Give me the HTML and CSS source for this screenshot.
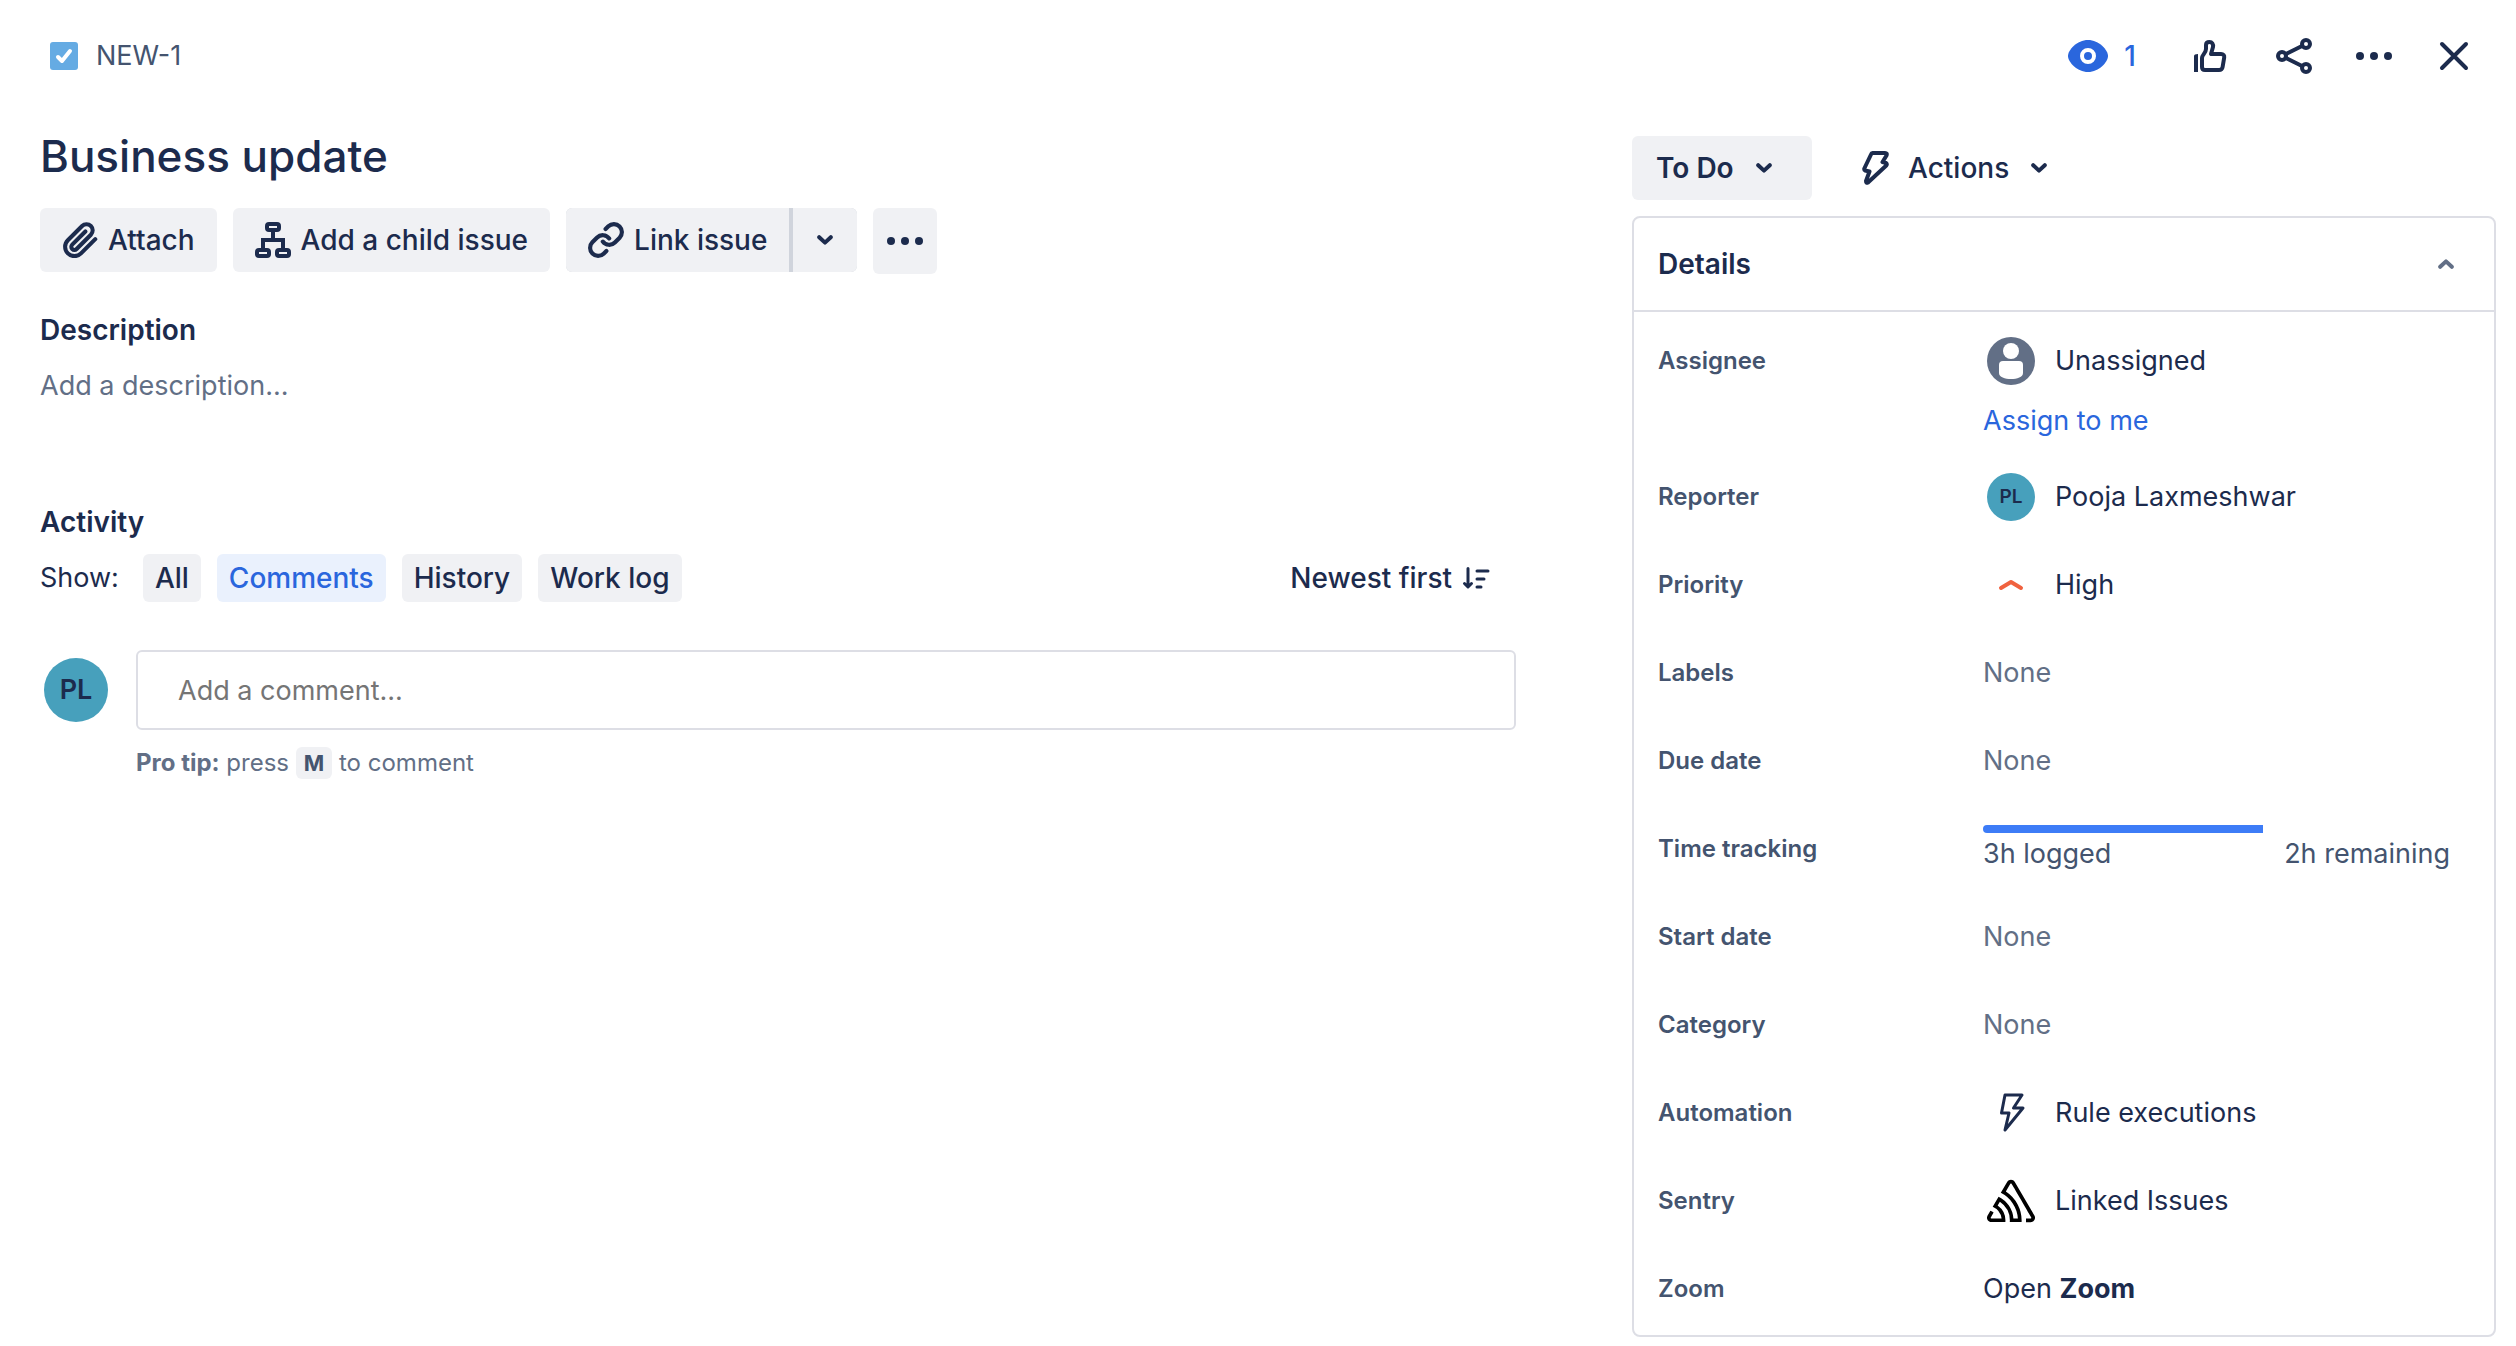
FILE: index.html
```html
<!DOCTYPE html>
<html lang="en">
<head>
<meta charset="utf-8">
<title>NEW-1 Business update</title>
<meta name="viewport" content="width=device-width, initial-scale=1.0">
<link rel="stylesheet" href="styles.css">
</head>
<body>
<header class="topbar">
	<div class="breadcrumb">
		<svg width="28" height="28" viewBox="0 0 28 28"><rect width="28" height="28" rx="3" fill="#65abe3"/><path d="M8 15l4 4 8-10" fill="none" stroke="#fff" stroke-width="4" stroke-linecap="round" stroke-linejoin="round"/></svg>
		<a href="#">NEW-1</a>
	</div>
	<div class="top-actions">
		<button class="icon-btn watch" type="button" aria-label="Watch options">
			<svg width="40" height="32" viewBox="0 0 40 32"><path d="M20 0C31 0 40 10 40 16S31 32 20 32 0 22 0 16 9 0 20 0z" fill="currentColor"/><circle cx="20" cy="16" r="6" fill="none" stroke="#fff" stroke-width="4"/></svg>
			<span>1</span>
		</button>
		<button class="icon-btn vote" type="button" aria-label="Vote">
			<svg class="line" width="40" height="40" viewBox="0 0 40 40"><path d="M4 36V20q0-2 4-2v18z" fill="currentColor" stroke="none"/><path d="M12 22c0-3 4-5 4-9V9c0-2 1.5-3 3.500-3 2.500 0 4 2 3.500 5l-2 7h10c2.500 0 3.500 1.500 3.200 3.500L32.600 31c-.3 2-1.600 3-3.600 3H15c-2 0-3-1-3-3z"/></svg>
		</button>
		<button class="icon-btn" type="button" aria-label="Share">
			<svg class="line" width="40" height="40" viewBox="0 0 40 40"><circle cx="32" cy="8" r="4"/><circle cx="8" cy="20" r="4"/><circle cx="32" cy="32" r="4"/><path d="M12 18l16-8M12 22l16 8"/></svg>
		</button>
		<button class="icon-btn" type="button" aria-label="More actions">
			<svg width="40" height="40" viewBox="0 0 40 40" fill="currentColor"><circle cx="6" cy="20" r="4"/><circle cx="20" cy="20" r="4"/><circle cx="34" cy="20" r="4"/></svg>
		</button>
		<button class="icon-btn" type="button" aria-label="Close">
			<svg class="line" width="40" height="40" viewBox="0 0 40 40"><path d="M8 8l24 24M32 8L8 32"/></svg>
		</button>
	</div>
</header>

<div class="columns">
<main>
	<h1>Business update</h1>
	<div class="toolbar">
		<button class="btn" type="button">
			<svg class="line" width="36" height="36" viewBox="0 0 23.2 23.2"><path d="M21.44 11.05l-9.19 9.19a6 6 0 0 1-8.49-8.49l9.19-9.19a4 4 0 0 1 5.66 5.66l-9.2 9.19a2 2 0 0 1-2.83-2.83l8.49-8.48" stroke-width="2.6"/></svg>
			Attach
		</button>
		<button class="btn" type="button">
			<svg class="line" width="36" height="36" viewBox="0 0 36 36"><rect x="12" y="2" width="12" height="6" rx="2"/><rect x="2" y="28" width="12" height="6" rx="2"/><rect x="22" y="28" width="12" height="6" rx="2"/><path d="M18 10v8M8 26v-8h20v8" stroke-linecap="butt" stroke-linejoin="miter"/></svg>
			Add a child issue
		</button>
		<div class="split">
			<button class="btn" type="button">
				<svg class="line" width="36" height="36" viewBox="0.75 0.75 22.5 22.5"><path d="M10 13a5 5 0 0 0 7.54.54l3-3a5 5 0 0 0-7.07-7.07l-1.72 1.71M14 11a5 5 0 0 0-7.54-.54l-3 3a5 5 0 0 0 7.07 7.07l1.71-1.71" stroke-width="2.6"/></svg>
				Link issue
			</button>
			<button class="btn square" type="button" aria-label="Link options">
				<svg class="line" width="16" height="10" viewBox="0 0 16 10"><path d="M2.2 2.2L8 7.6l5.8-5.4"/></svg>
			</button>
		</div>
		<button class="btn square more" type="button" aria-label="More">
			<svg width="40" height="40" viewBox="0 0 40 40" fill="currentColor"><circle cx="6" cy="20" r="4"/><circle cx="20" cy="20" r="4"/><circle cx="34" cy="20" r="4"/></svg>
		</button>
	</div>

	<section class="description">
		<h2>Description</h2>
		<p>Add a description...</p>
	</section>

	<section class="activity">
		<h2>Activity</h2>
		<div class="filters">
			<span class="show">Show:</span>
			<button class="chip" type="button">All</button>
			<button class="chip selected" type="button">Comments</button>
			<button class="chip" type="button">History</button>
			<button class="chip" type="button">Work log</button>
			<button class="sort" type="button">
				Newest first
				<svg class="line" width="28" height="24" viewBox="0 0 28 24"><path d="M6 2.500v18M2.500 17.500L6 21l3.500-3.500M15 5h11M15 13h7M15 21h4" stroke-width="3"/></svg>
			</button>
		</div>
		<div class="comment">
			<span class="avatar">PL</span>
			<div class="comment-body">
				<input type="text" aria-label="Add a comment" placeholder="Add a comment...">
				<p class="tip"><strong>Pro tip:</strong> press <kbd>M</kbd> to comment</p>
			</div>
		</div>
	</section>
</main>

<aside>
	<div class="status-row">
		<div class="status">
			<select aria-label="Status"><option>To Do</option></select>
			<svg class="line" width="16" height="10" viewBox="0 0 16 10"><path d="M2.2 2.2L8 7.6l5.8-5.4"/></svg>
		</div>
		<button class="actions" type="button">
			<svg class="line" width="28" height="34" viewBox="0 0 28 34"><path d="M10.5 2H23q2.500 0 1.500 2.500L20.500 11l3.500 1q1.500 1 .3 2.500L6 31.500q-2 1-2-1.500L7.500 20.500 3 19.500Q2 19 2.300 17.500L9 3.500Q9.500 2 10.500 2z"/></svg>
			Actions
			<svg class="line" width="16" height="10" viewBox="0 0 16 10"><path d="M2.2 2.2L8 7.6l5.8-5.4"/></svg>
		</button>
	</div>

	<div class="card">
		<div class="card-head">
			<h2>Details</h2>
			<button class="collapse" type="button" aria-label="Collapse details">
				<svg class="line" width="16" height="10" viewBox="0 0 16 10"><path d="M2.2 7.8L8 2.4l5.8 5.4"/></svg>
			</button>
		</div>
		<dl>
			<div class="field">
				<dt>Assignee</dt>
				<dd>
					<div class="value">
						<svg width="48" height="48" viewBox="0 0 48 48"><circle cx="24" cy="24" r="24" fill="#626f86"/><circle cx="24" cy="14" r="8" fill="#fff"/><path d="M16 24h16q4 0 4 4v8c0 4-6 6-12 6s-12-2-12-6v-8q0-4 4-4z" fill="#fff"/></svg>
						Unassigned
					</div>
					<a class="assign" href="#">Assign to me</a>
				</dd>
			</div>
			<div class="field">
				<dt>Reporter</dt>
				<dd><div class="value"><span class="avatar small">PL</span>Pooja Laxmeshwar</div></dd>
			</div>
			<div class="field">
				<dt>Priority</dt>
				<dd><div class="value"><svg class="line" width="48" height="48" viewBox="0 0 48 48"><path d="M14 27l10-6 10 6" stroke="#f0623f"/></svg>High</div></dd>
			</div>
			<div class="field"><dt>Labels</dt><dd class="none">None</dd></div>
			<div class="field"><dt>Due date</dt><dd class="none">None</dd></div>
			<div class="field">
				<dt>Time tracking</dt>
				<dd class="time">
					<div class="track"><div class="logged" style="width: 60%"></div></div>
					<div class="time-text"><span>3h logged</span><span>2h remaining</span></div>
				</dd>
			</div>
			<div class="field"><dt>Start date</dt><dd class="none">None</dd></div>
			<div class="field"><dt>Category</dt><dd class="none">None</dd></div>
			<div class="field">
				<dt>Automation</dt>
				<dd><div class="value"><svg class="line" width="48" height="48" viewBox="0 0 48 48"><path d="M18 6h17l-8.500 13H36L18 41l4-17h-7.500z" stroke-width="3"/></svg>Rule executions</div></dd>
			</div>
			<div class="field">
				<dt>Sentry</dt>
				<dd><div class="value"><svg width="48" height="48" viewBox="0 0 24 24"><path d="M13.91 2.505c-.873-1.448-2.972-1.448-3.844 0L6.904 7.92a15.478 15.478 0 0 1 8.53 12.811h-2.221A13.301 13.301 0 0 0 5.784 9.814l-2.926 5.06a7.65 7.65 0 0 1 4.435 5.848H2.194a.365.365 0 0 1-.298-.534l1.413-2.402a5.16 5.16 0 0 0-1.614-.913L.296 19.275a2.182 2.182 0 0 0 .812 2.999 2.24 2.24 0 0 0 1.086.288h6.983a9.322 9.322 0 0 0-3.845-8.318l1.11-1.922a11.47 11.47 0 0 1 4.95 10.24h5.915a17.242 17.242 0 0 0-7.885-15.28l2.244-3.845a.37.37 0 0 1 .504-.13c.255.14 9.75 16.708 9.928 16.9a.365.365 0 0 1-.327.543h-2.287c.029.612.029 1.223 0 1.831h2.297a2.206 2.206 0 0 0 1.922-3.31z"/></svg>Linked Issues</div></dd>
			</div>
			<div class="field"><dt>Zoom</dt><dd class="plain">Open <strong>Zoom</strong></dd></div>
		</dl>
	</div>
</aside>
</div>
</body>
</html>
```
FILE: styles.css
```css
* {
	box-sizing: border-box;
}
body {
	margin: 0;
	padding: 24px 20px 0 40px;
	background: #fff;
	color: #1c2b4d;
	font-family: Inter, sans-serif;
	font-size: 27px;
	line-height: 40px;
}
h1, h2, p, dl, dd {
	margin: 0;
}
h2 {
	font-size: 28px;
	font-weight: 600;
	line-height: 40px;
}
a {
	color: #2a66dd;
	text-decoration: none;
}
svg {
	display: block;
	flex: none;
}
.line {
	fill: none;
	stroke: currentColor;
	stroke-width: 4;
	stroke-linecap: round;
	stroke-linejoin: round;
}
button, select, input {
	margin: 0;
	padding: 0;
	border: none;
	background: none;
	color: inherit;
	font: inherit;
}
button, select {
	font-size: 28px;
	font-weight: 500;
	cursor: pointer;
}

/* top bar */
.topbar {
	display: flex;
	justify-content: space-between;
	align-items: center;
	height: 64px;
}
.breadcrumb {
	display: flex;
	align-items: center;
	gap: 18px;
	padding-left: 10px;
}
.breadcrumb a {
	color: #44546f;
}
.top-actions {
	display: flex;
	align-items: center;
	gap: 16px;
	padding-right: 10px;
}
.icon-btn {
	display: flex;
	justify-content: center;
	align-items: center;
	width: 64px;
	height: 64px;
}
.vote {
	width: 72px;
}
.watch {
	gap: 16px;
	width: 112px;
	color: #2a66dd;
}

/* two columns */
.columns {
	display: grid;
	grid-template-columns: 1476fr 864fr;
	gap: 116px;
}
h1 {
	padding-top: 38px;
	font-size: 44px;
	font-weight: 500;
	line-height: 60px;
}
.toolbar {
	display: flex;
	align-items: flex-start;
	gap: 16px;
	padding-top: 22px;
}
.btn {
	display: flex;
	align-items: center;
	gap: 10px;
	height: 64px;
	padding: 0 22px;
	border-radius: 6px;
	background: #f0f1f4;
}
.split {
	display: flex;
	gap: 4px;
	border-radius: 6px;
	background: #d0d4dc;
}
.split .btn:first-child {
	border-radius: 6px 0 0 6px;
}
.split .btn:last-child {
	border-radius: 0 6px 6px 0;
}
.square {
	justify-content: center;
	width: 64px;
	padding: 0;
}
.more {
	height: 66px;
}
.description {
	padding-top: 36px;
}
.description p {
	padding-top: 16px;
	color: #626f86;
}
.activity {
	padding-top: 96px;
}
.filters {
	display: flex;
	align-items: center;
	gap: 16px;
	padding-top: 12px;
}
.show {
	margin-right: 8px;
}
.chip {
	height: 48px;
	padding: 0 12px;
	border-radius: 6px;
	background: #f0f1f4;
}
.selected {
	background: #eaf1fd;
	color: #2a66dd;
}
.sort {
	display: flex;
	align-items: center;
	gap: 10px;
	margin-left: auto;
	padding-right: 26px;
}
.comment {
	display: flex;
	gap: 28px;
	padding: 48px 0 0 4px;
}
.avatar {
	flex: none;
	width: 64px;
	height: 64px;
	margin-top: 8px;
	border-radius: 50%;
	background: #47a0bc;
	font-weight: 600;
	line-height: 64px;
	text-align: center;
}
.small {
	width: 48px;
	height: 48px;
	margin: 0;
	font-size: 19px;
	line-height: 48px;
}
.comment-body {
	flex: 1;
}
.comment-body input {
	display: block;
	width: 100%;
	height: 80px;
	padding: 0 40px;
	border: 2px solid #dddee5;
	border-radius: 6px;
}
.comment-body input::placeholder {
	color: #757575;
	opacity: 1;
}
.tip {
	padding-top: 13px;
	color: #626f86;
	font-size: 24px;
}
kbd {
	display: inline-block;
	padding: 0 8px;
	border-radius: 6px;
	background: #f0f1f4;
	color: #44546f;
	font-family: inherit;
	font-size: 22px;
	font-weight: 700;
	line-height: 32px;
}

/* right column */
.status-row {
	display: flex;
	gap: 50px;
	padding-top: 48px;
}
.status {
	display: grid;
	align-items: center;
	width: 180px;
}
.status select {
	grid-area: 1 / 1;
	appearance: none;
	height: 64px;
	padding-left: 24px;
	border-radius: 6px;
	background: #f0f1f4;
	font-weight: 600;
}
.status svg {
	grid-area: 1 / 1;
	justify-self: end;
	margin-right: 40px;
	pointer-events: none;
}
.actions {
	display: flex;
	align-items: center;
	gap: 18px;
	height: 64px;
}
.actions svg:last-child {
	margin-left: 4px;
}
.card {
	margin-top: 16px;
	border: 2px solid #dddee5;
	border-radius: 8px;
}
.card-head {
	display: flex;
	justify-content: space-between;
	align-items: center;
	height: 94px;
	padding: 0 16px 0 24px;
	border-bottom: 2px solid #dddee5;
}
.collapse {
	display: flex;
	justify-content: center;
	align-items: center;
	width: 64px;
	height: 64px;
	color: #626f86;
}
dl {
	padding: 5px 44px 2px 24px;
}
.field {
	display: grid;
	grid-template-columns: 325px 1fr;
	padding: 20px 0;
}
dt {
	color: #44546f;
	font-size: 24px;
	font-weight: 600;
	line-height: 48px;
}
.value {
	display: flex;
	align-items: center;
	gap: 20px;
	height: 48px;
	padding-left: 4px;
}
.assign {
	display: block;
	margin-bottom: -8px;
	padding-top: 16px;
}
.none {
	color: #626f86;
	line-height: 48px;
}
.plain {
	line-height: 48px;
}
.time {
	color: #44546f;
	line-height: 38px;
}
.track {
	height: 10px;
}
.logged {
	height: 8px;
	border-radius: 4px 0 0 4px;
	background: #3d7cf7;
}
.time-text {
	display: flex;
	justify-content: space-between;
}
```
